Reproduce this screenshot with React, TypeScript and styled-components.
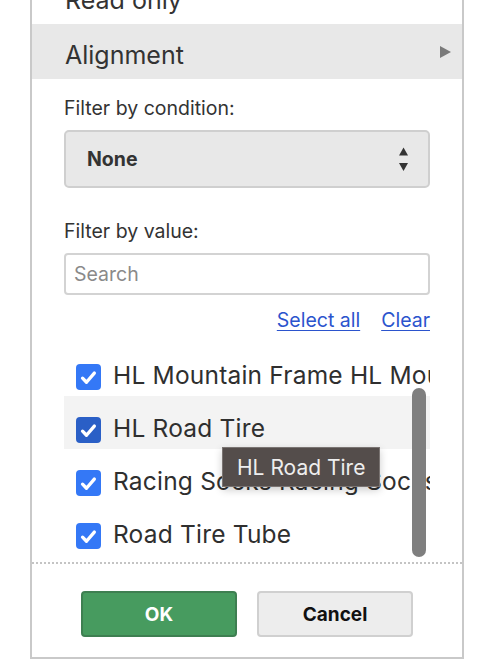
import { createGlobalStyle } from 'styled-components'
import styled from 'styled-components'

const GlobalStyle = createGlobalStyle`
  html, body {
    margin: 0;
    padding: 0;
    background: #ffffff;
    font-family: Inter, 'Noto Sans', 'Liberation Sans', sans-serif;
    color: #333333;
  }
`

const items = [
  { label: 'HL Mountain Frame HL Mountain Frame', hovered: false },
  { label: 'HL Road Tire', hovered: true },
  { label: 'Racing Socks Racing Socks', hovered: false },
  { label: 'Road Tire Tube', hovered: false },
  { label: 'Road-150 Frame', hovered: false },
]

const Check = () => (
  <svg width="19" height="19" viewBox="0 0 16 16">
    <path d="M3 8.6 L6.3 12 L12.9 4.3" fill="none" stroke="#fff" strokeWidth="2.8" strokeLinecap="round" strokeLinejoin="round" />
  </svg>
)

const UpDown = () => (
  <svg width="11" height="25" viewBox="0 0 11 25">
    <path d="M5.5 0.5 L10 8.5 L1 8.5 Z" fill="#333" />
    <path d="M1 16 L10 16 L5.5 24 Z" fill="#333" />
  </svg>
)

const App = () => {
  return (
    <>
      <GlobalStyle />
      <Page>
        <Panel>
          <MenuItem>Read only</MenuItem>
          <MenuItem $active>
            Alignment
            <SubArrow />
          </MenuItem>
          <FilterBody>
            <Label>Filter by condition:</Label>
            <SelectBox>
              <span>None</span>
              <UpDown />
            </SelectBox>
            <Label $spaced>Filter by value:</Label>
            <SearchInput placeholder="Search" />
            <Links>
              <LinkText>Select all</LinkText>
              <LinkText>Clear</LinkText>
            </Links>
            <ListWrap>
              <List>
                {items.map((item) => (
                  <Row key={item.label} $hovered={item.hovered}>
                    <Box $dark={item.hovered}>
                      <Check />
                    </Box>
                    <RowText>{item.label}</RowText>
                  </Row>
                ))}
              </List>
              <Thumb />
              <Tooltip>HL Road Tire</Tooltip>
            </ListWrap>
          </FilterBody>
          <Footer>
            <OkButton>OK</OkButton>
            <CancelButton>Cancel</CancelButton>
          </Footer>
        </Panel>
      </Page>
    </>
  )
}

const Page = styled.div`
  width: 503px;
  height: 660px;
  overflow: hidden;
  position: relative;
`

const Panel = styled.div`
  position: absolute;
  left: 30px;
  top: -33px;
  width: 430px;
  border: 2px solid #c9c9c9;
  background: #ffffff;
  display: flex;
  flex-direction: column;
`

const MenuItem = styled.div<{ $active?: boolean }>`
  height: 55px;
  box-sizing: border-box;
  flex-shrink: 0;
  display: flex;
  align-items: center;
  justify-content: space-between;
  padding: 7px 11px 0 33px;
  font-size: 25px;
  color: #333;
  background: ${({ $active }) => ($active ? '#e8e8e8' : 'transparent')};
`

const SubArrow = styled.span`
  width: 0;
  height: 0;
  margin-top: -7px;
  border-top: 6px solid transparent;
  border-bottom: 6px solid transparent;
  border-left: 11px solid #7a7a7a;
`

const FilterBody = styled.div`
  padding: 17px 32px 0 32px;
  display: flex;
  flex-direction: column;
`

const Label = styled.div<{ $spaced?: boolean }>`
  font-size: 19.5px;
  line-height: 24px;
  margin-top: ${({ $spaced }) => ($spaced ? '31px' : '0')};
  margin-bottom: 10px;
  color: #333;
`

const SelectBox = styled.div`
  height: 58px;
  box-sizing: border-box;
  border: 2px solid #cfcfcf;
  border-radius: 5px;
  background: #e8e8e8;
  display: flex;
  align-items: center;
  justify-content: space-between;
  padding: 0 19px 0 21px;
  font-size: 19.5px;
  font-weight: 700;
  color: #333;
`

const SearchInput = styled.input`
  height: 42px;
  box-sizing: border-box;
  border: 2px solid #d3d3d3;
  border-radius: 4px;
  padding: 0 8px;
  font-family: inherit;
  font-size: 19.5px;
  color: #333;
  outline: none;
  &::placeholder {
    color: #8a8a8a;
  }
`

const Links = styled.div`
  display: flex;
  justify-content: flex-end;
  gap: 21px;
  margin-top: 13px;
`

const LinkText = styled.a`
  font-size: 19.5px;
  color: #2b54cd;
  text-decoration: underline;
  text-underline-offset: 3px;
  line-height: 24px;
  cursor: pointer;
`

const ListWrap = styled.div`
  position: relative;
  height: 219px;
  margin-top: 11px;
`

const List = styled.div`
  height: 100%;
  overflow: hidden;
  display: flex;
  flex-direction: column;
`

const Row = styled.div<{ $hovered?: boolean }>`
  height: 53px;
  box-sizing: border-box;
  flex-shrink: 0;
  display: flex;
  align-items: flex-end;
  gap: 12px;
  padding: 0 0 6px 12px;
  background: ${({ $hovered }) => ($hovered ? '#f3f3f3' : 'transparent')};
  overflow: hidden;
  white-space: nowrap;
`

const Box = styled.span<{ $dark?: boolean }>`
  width: 25px;
  height: 26px;
  flex-shrink: 0;
  border-radius: 4px;
  background: ${({ $dark }) => ($dark ? '#2a5fc6' : '#3478f6')};
  display: flex;
  align-items: center;
  justify-content: center;
`

const RowText = styled.span`
  font-size: 24.5px;
  line-height: 30px;
  letter-spacing: 0.2px;
  color: #2f2f2f;
`

const Thumb = styled.div`
  position: absolute;
  right: 4px;
  top: 45px;
  width: 14px;
  height: 169px;
  border-radius: 7px;
  background: #7f7f7f;
`

const Tooltip = styled.div`
  position: absolute;
  left: 158px;
  top: 104px;
  height: 40px;
  box-sizing: border-box;
  padding: 0 14px;
  display: flex;
  align-items: center;
  background: #544d4b;
  border: 1px solid #7a7472;
  color: #eeeeee;
  font-size: 21px;
  box-shadow: 0 3px 8px rgba(0, 0, 0, 0.2);
  white-space: nowrap;
`

const Footer = styled.div`
  border-top: 2px dotted #c4c4c4;
  display: flex;
  justify-content: center;
  gap: 20px;
  padding: 27px 0 20px;
`

const BaseButton = styled.button`
  width: 156px;
  height: 46px;
  border-radius: 4px;
  font-family: inherit;
  font-size: 19px;
  font-weight: 700;
  cursor: pointer;
`

const OkButton = styled(BaseButton)`
  background: #479b5f;
  border: 2px solid #3e7f51;
  color: #ffffff;
`

const CancelButton = styled(BaseButton)`
  background: #ededed;
  border: 2px solid #d0d0d0;
  color: #111;
`

export default App
